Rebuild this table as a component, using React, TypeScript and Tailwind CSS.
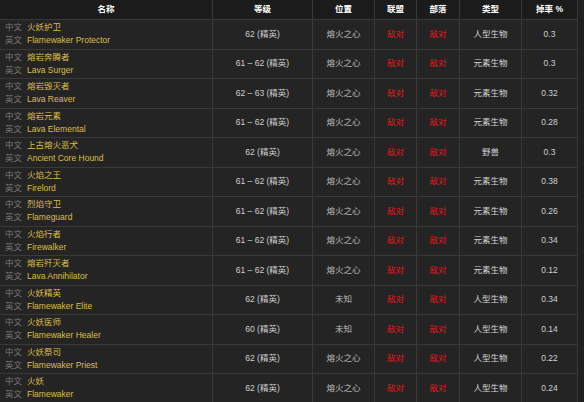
const ROWS = [
  { cn: "火妖护卫", en: "Flamewaker Protector", level: "62 (精英)", loc: "熔火之心", type: "人型生物", rate: "0.3" },
  { cn: "熔岩奔腾者", en: "Lava Surger", level: "61 – 62 (精英)", loc: "熔火之心", type: "元素生物", rate: "0.3" },
  { cn: "熔岩毁灭者", en: "Lava Reaver", level: "62 – 63 (精英)", loc: "熔火之心", type: "元素生物", rate: "0.32" },
  { cn: "熔岩元素", en: "Lava Elemental", level: "61 – 62 (精英)", loc: "熔火之心", type: "元素生物", rate: "0.28" },
  { cn: "上古熔火恶犬", en: "Ancient Core Hound", level: "62 (精英)", loc: "熔火之心", type: "野兽", rate: "0.3" },
  { cn: "火焰之王", en: "Firelord", level: "61 – 62 (精英)", loc: "熔火之心", type: "元素生物", rate: "0.38" },
  { cn: "烈焰守卫", en: "Flameguard", level: "61 – 62 (精英)", loc: "熔火之心", type: "元素生物", rate: "0.26" },
  { cn: "火焰行者", en: "Firewalker", level: "61 – 62 (精英)", loc: "熔火之心", type: "元素生物", rate: "0.34" },
  { cn: "熔岩歼灭者", en: "Lava Annihilator", level: "61 – 62 (精英)", loc: "熔火之心", type: "元素生物", rate: "0.12" },
  { cn: "火妖精英", en: "Flamewaker Elite", level: "62 (精英)", loc: "未知", type: "人型生物", rate: "0.34" },
  { cn: "火妖医师", en: "Flamewaker Healer", level: "60 (精英)", loc: "未知", type: "人型生物", rate: "0.14" },
  { cn: "火妖祭司", en: "Flamewaker Priest", level: "62 (精英)", loc: "熔火之心", type: "人型生物", rate: "0.22" },
  { cn: "火妖", en: "Flamewaker", level: "62 (精英)", loc: "熔火之心", type: "人型生物", rate: "0.24" },
];

const COLS = "grid grid-cols-[213px_100px_62px_42px_43px_62px_56px]";
const cell = "flex items-center justify-center border-r border-[#393939]";

export default function App() {
  return (
    <div
      className="w-[584px] h-[402px] overflow-hidden bg-[#1f1f1f] text-[8.5px] leading-[13px]"
      style={{ fontFamily: '"Liberation Sans", "Noto Sans CJK SC", sans-serif' }}
    >
      <div className="w-[578px]">
        {/* 表头 */}
        <div className={`${COLS} h-[20px] bg-[#1b1b1b] border-b border-[#393939] font-bold text-white`}>
          <span className={cell}>名称</span>
          <span className={cell}>等级</span>
          <span className={cell}>位置</span>
          <span className={cell}>联盟</span>
          <span className={cell}>部落</span>
          <span className={cell}>类型</span>
          <span className={cell}>掉率 %</span>
        </div>

        {ROWS.map((r) => (
          <div key={r.en} className={`${COLS} h-[29.5px] bg-[#242424] border-b border-[#393939]`}>
            <div className="flex flex-col justify-center pl-[5px] border-r border-[#393939]">
              <div className="flex gap-[5px]">
                <span className="text-[#7a7a7a]">中文</span>
                <span className="text-[#dfbe45]">{r.cn}</span>
              </div>
              <div className="flex gap-[5px]">
                <span className="text-[#7a7a7a]">英文</span>
                <span className="text-[#dfbe45]">{r.en}</span>
              </div>
            </div>
            <span className={`${cell} text-[#cfcfcf]`}>{r.level}</span>
            <span className={`${cell} text-[#bdbdbd]`}>{r.loc}</span>
            <span className={`${cell} text-[#e8161b]`}>敌对</span>
            <span className={`${cell} text-[#e8161b]`}>敌对</span>
            <span className={`${cell} text-[#d4d4d4]`}>{r.type}</span>
            <span className={`${cell} text-[#cfcfcf]`}>{r.rate}</span>
          </div>
        ))}
      </div>
    </div>
  );
}
